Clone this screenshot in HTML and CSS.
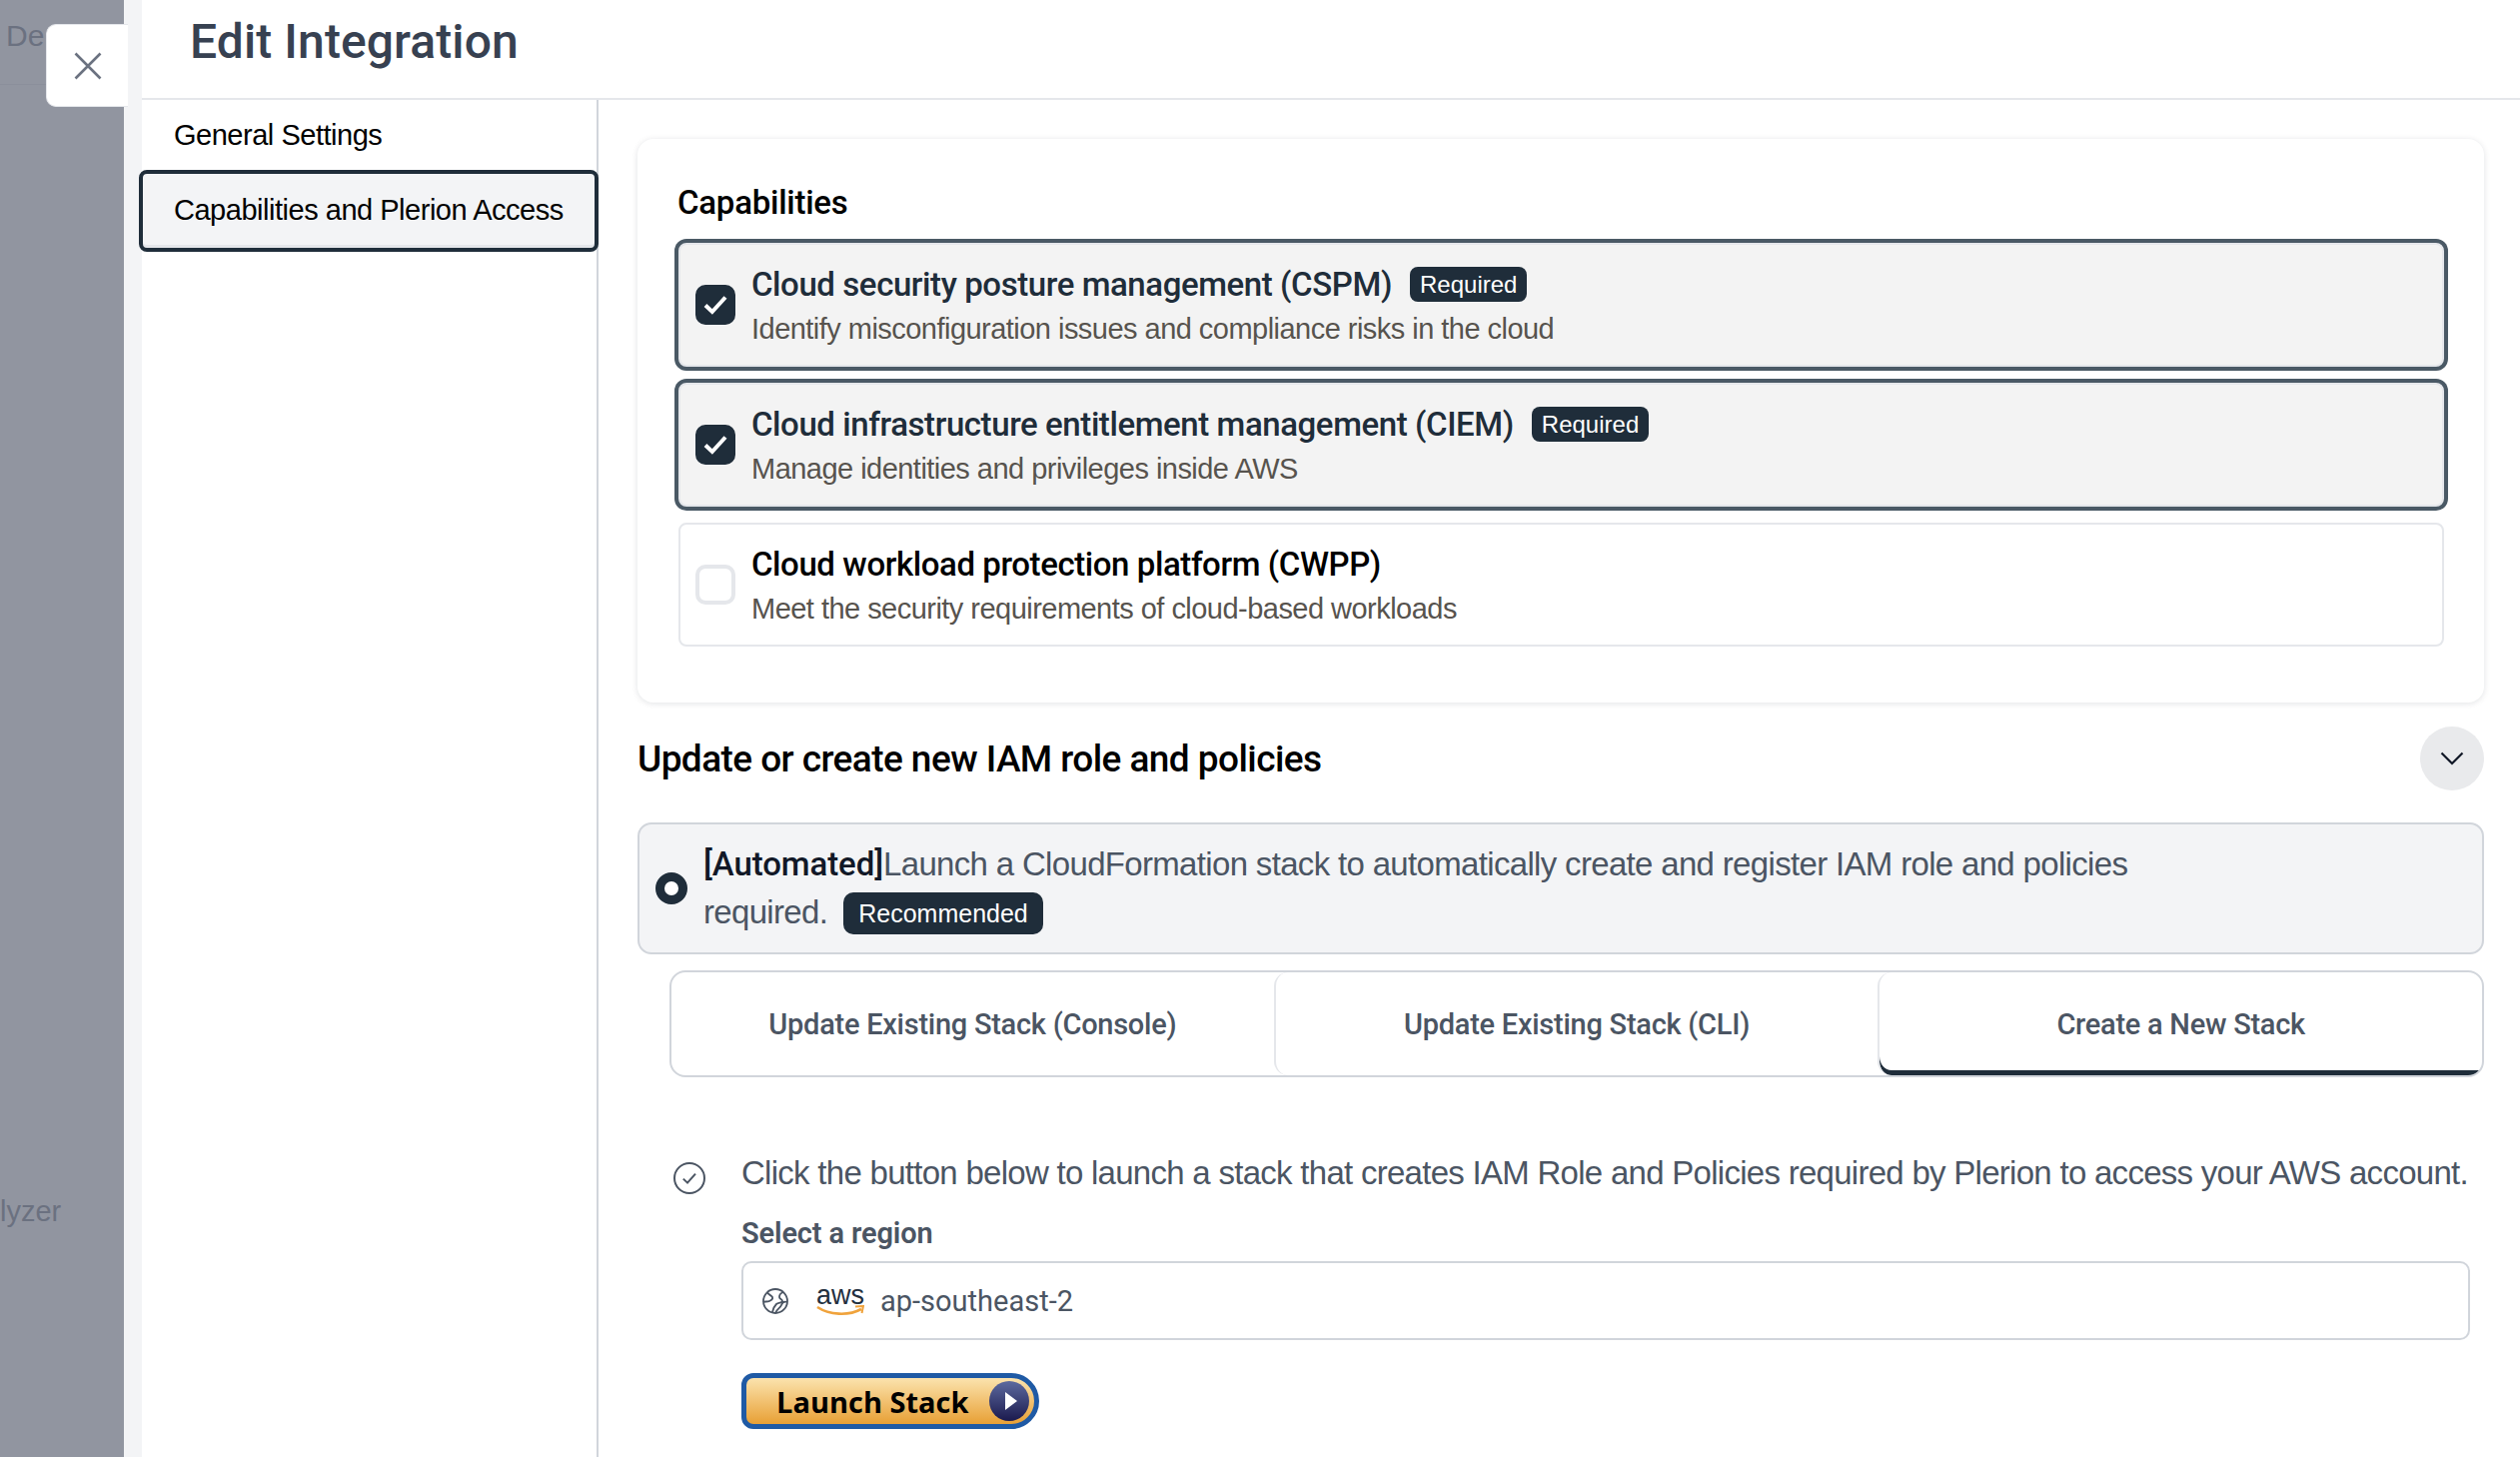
FILE: index.html
```html
<!DOCTYPE html>
<html lang="en">
<head>
<meta charset="utf-8">
<title>Edit Integration</title>
<link rel="stylesheet" href="styles.css">
</head>
<body>
<div class="app">
  <aside class="backdrop">
    <div class="backdrop-top"><span class="backdrop-de">De</span></div>
    <span class="backdrop-lyzer">lyzer</span>
  </aside>
  <button class="close" aria-label="Close">
    <svg width="28" height="28" viewBox="0 0 28 28"><path d="M1.5 1.5 26.5 26.5M26.5 1.5 1.5 26.5" fill="none" stroke="#6b7280" stroke-width="2.6"/></svg>
  </button>
  <div class="drawer">
    <header class="drawer-head"><h1>Edit Integration</h1></header>
    <div class="drawer-body">
      <nav class="side">
        <a class="side-item">General Settings</a>
        <a class="side-item active">Capabilities and Plerion Access</a>
      </nav>
      <main class="content">
        <section class="card">
          <h2>Capabilities</h2>
          <div class="caps">
            <div class="cap on">
              <span class="box checked"><svg width="28" height="28" viewBox="0 0 28 28"><path d="M4 14.500 10.800 21 24 6.500" fill="none" stroke="#fff" stroke-width="4"/></svg></span>
              <div>
                <div class="cap-title">Cloud security posture management (CSPM)<span class="tag">Required</span></div>
                <div class="cap-desc">Identify misconfiguration issues and compliance risks in the cloud</div>
              </div>
            </div>
            <div class="cap on">
              <span class="box checked"><svg width="28" height="28" viewBox="0 0 28 28"><path d="M4 14.500 10.800 21 24 6.500" fill="none" stroke="#fff" stroke-width="4"/></svg></span>
              <div>
                <div class="cap-title">Cloud infrastructure entitlement management (CIEM)<span class="tag">Required</span></div>
                <div class="cap-desc">Manage identities and privileges inside AWS</div>
              </div>
            </div>
            <div class="cap">
              <span class="box"></span>
              <div>
                <div class="cap-title off">Cloud workload protection platform (CWPP)</div>
                <div class="cap-desc">Meet the security requirements of cloud-based workloads</div>
              </div>
            </div>
          </div>
        </section>

        <div class="section-head">
          <h3>Update or create new IAM role and policies</h3>
          <button class="chev" aria-label="Collapse">
            <svg width="24" height="14" viewBox="0 0 24 14"><path d="M1.500 1.500 12 12 22.500 1.500" fill="none" stroke="#111827" stroke-width="2.2"/></svg>
          </button>
        </div>

        <div class="method">
          <span class="radio"></span>
          <p class="method-text"><b>[Automated]</b>Launch a CloudFormation stack to automatically create and register IAM role and policies<br>required.<span class="tag big">Recommended</span></p>
        </div>

        <div class="tabs">
          <div class="tab">Update Existing Stack (Console)</div>
          <div class="tab">Update Existing Stack (CLI)</div>
          <div class="tab current">Create a New Stack</div>
        </div>

        <div class="step">
          <svg class="step-icon" width="32" height="32" viewBox="0 0 32 32"><circle cx="16" cy="16" r="15" fill="none" stroke="#4b5563" stroke-width="2"/><path d="M9.800 16.600 14 20.600 22 11.600" fill="none" stroke="#4b5563" stroke-width="2"/></svg>
          <div class="step-body">
            <p class="step-text">Click the button below to launch a stack that creates IAM Role and Policies required by Plerion to access your AWS account.</p>
            <label class="field-label">Select a region</label>
            <div class="select">
              <svg class="globe" width="28" height="28" viewBox="0 0 28 28"><g fill="none" stroke="#4b5563" stroke-width="1.800"><circle cx="14" cy="14" r="12"/><path d="M6 5c1 3 4 3 5 5s-1 3-3 4-5 0-6 1M22 5c-3 1-4 3-4 5s3 2 3 4-4 1-6 3-3 3-4 8M26 15c-3-1-5 0-6 3s-5 4-6 8"/></g></svg>
              <span class="aws"><span class="aws-word">aws</span><svg width="48" height="12" viewBox="0 0 48 12"><path d="M1 2c12 8 31 9 44 2" fill="none" stroke="#f0a33c" stroke-width="2.600"/><path d="M39 1.500 47 1 45.500 8" fill="none" stroke="#f0a33c" stroke-width="2"/></svg></span>
              <span class="select-value">ap-southeast-2</span>
            </div>
            <button class="launch">Launch Stack<span class="play"><svg width="14" height="20" viewBox="0 0 14 20"><path d="M1 1 13 10 1 19Z" fill="#fff"/></svg></span></button>
          </div>
        </div>
      </main>
    </div>
  </div>
</div>
</body>
</html>
```

FILE: styles.css
```css
* { box-sizing: border-box; }
html, body { margin: 0; height: 100%; background: #fff; overflow: hidden; }
body { font-family: "Liberation Sans", Arial, sans-serif; color: #000; }
h1, h2, h3, p { margin: 0; font-weight: 400; }
button { font-family: inherit; padding: 0; cursor: pointer; }

.app { position: relative; display: flex; width: 2522px; height: 1458px; overflow: hidden; }

.backdrop { position: relative; width: 124px; flex: none; background: #9195a0; color: #6b7180; font-size: 30px; }
.backdrop-top { height: 85px; border-bottom: 1px solid #8b8f9b; }
.backdrop-de { position: absolute; left: 6px; top: 19px; }
.backdrop-lyzer { position: absolute; left: 0; top: 1196px; font-size: 29px; }

.close { position: absolute; left: 46px; top: 24px; z-index: 2; width: 82px; height: 83px; display: flex; align-items: center; justify-content: center; background: #fff; border: 1px solid #e5e7eb; border-right: 0; border-radius: 10px 0 0 10px; }

.drawer { flex: 1; min-width: 0; display: flex; flex-direction: column; border-left: 18px solid #f3f4f6; }
.drawer-head { height: 100px; flex: none; padding-left: 48px; border-bottom: 2px solid #e5e7eb; }
.drawer-head h1 { font-family: Roboto, sans-serif; font-weight: 500; font-size: 48px; letter-spacing: .1px; line-height: 84px; color: #374151; }
.drawer-body { flex: 1; display: flex; min-height: 0; }

.side { width: 457px; flex: none; display: flex; flex-direction: column; border-right: 2px solid #d1d5db; padding-top: 10px; gap: 10px; }
.side-item { display: block; height: 50px; padding-left: 32px; font-size: 29px; letter-spacing: -.48px; line-height: 50px; }
.side-item.active { height: 82px; margin: 0 -2px 0 -3px; padding-left: 31px; line-height: 72px; background: #f3f4f6; border: 4px solid #1f2d3a; border-radius: 8px; box-shadow: inset 0 -3px 0 #e5e7eb; }

.content { flex: 1; min-width: 0; padding: 39px 36px 0 39px; }

.card { height: 564px; background: #fff; border-radius: 16px; padding: 47px 40px 0 41px; box-shadow: 0 1px 6px rgba(17, 24, 39, .12); }
.card h2 { font-family: Roboto, sans-serif; font-weight: 500; font-size: 33px; letter-spacing: -.25px; line-height: 34px; margin-left: -1px; }
.caps { display: flex; flex-direction: column; gap: 16px; margin-top: 23px; }
.cap { height: 124px; display: flex; align-items: center; gap: 16px; padding: 3px 0 0 15px; border: 2px solid #e5e7eb; border-radius: 8px; }
.cap.on { background: #f3f3f3; box-shadow: 0 0 0 4px #4a5965; border-bottom-color: #e5e7eb; }
.box { width: 40px; height: 40px; flex: none; margin-top: -3px; display: flex; align-items: center; justify-content: center; border: 4px solid #e5e7eb; border-radius: 10px; background: #fff; }
.box.checked { background: #1f2d3a; border-color: #1f2d3a; }
.cap-title { display: flex; align-items: center; font-family: Roboto, sans-serif; font-weight: 500; font-size: 33px; letter-spacing: -.42px; line-height: 40px; color: #1f2d3a; }
.cap-title.off { color: #000; }
.cap-desc { font-size: 29px; letter-spacing: -.53px; line-height: 40px; margin-top: 4px; color: #57534e; }

.tag { display: inline-block; height: 35px; margin-left: 18px; padding: 0 10px; border-radius: 8px; background: #1f2d3a; color: #fff; font-family: "Liberation Sans", sans-serif; font-size: 24px; letter-spacing: 0; line-height: 35px; }
.tag.big { height: 42px; margin-left: 16px; padding: 0 15px; line-height: 42px; font-size: 25px; border-radius: 10px; vertical-align: 1px; }

.section-head { display: flex; align-items: center; justify-content: space-between; margin-top: 24px; }
.section-head h3 { font-family: Roboto, sans-serif; font-weight: 500; font-size: 37px; letter-spacing: -.57px; }
.chev { width: 64px; height: 64px; border: 0; border-radius: 50%; background: #e9eaec; display: flex; align-items: center; justify-content: center; }

.method { height: 132px; margin-top: 32px; display: flex; align-items: center; gap: 16px; padding: 0 16px; background: #f3f4f6; border: 2px solid #d1d5db; border-radius: 14px; }
.radio { width: 32px; height: 32px; flex: none; border-radius: 50%; background: #fff; border: 9px solid #1f2d3a; }
.method-text { font-size: 33px; letter-spacing: -.67px; line-height: 48px; color: #4b5563; }
.method-text b { font-family: Roboto, sans-serif; font-weight: 500; letter-spacing: -.1px; color: #111827; }

.tabs { display: flex; height: 107px; margin: 16px 0 0 32px; border: 2px solid #d1d5db; border-radius: 16px; overflow: hidden; }
.tab { flex: 1; display: flex; align-items: center; justify-content: center; font-family: Roboto, sans-serif; font-weight: 500; font-size: 29px; letter-spacing: -.26px; color: #4b5563; }
.tab + .tab { border-left: 2px solid #e5e7eb; border-radius: 14px 0 0 14px; }
.tab.current { box-shadow: inset 0 -5px 0 #1f2d3a; }

.step { display: flex; gap: 36px; margin: 85px 14px 0 36px; }
.step-icon { flex: none; }
.step-body { flex: 1; min-width: 0; }
.step-text { font-size: 33px; letter-spacing: -.72px; line-height: 40px; margin-top: -9px; color: #4b5563; white-space: nowrap; }
.field-label { display: block; margin-top: 22px; font-family: Roboto, sans-serif; font-weight: 600; font-size: 29px; letter-spacing: -.15px; line-height: 36px; color: #4b5563; }
.select { height: 79px; margin-top: 10px; display: flex; align-items: center; padding-left: 18px; border: 2px solid #d1d5db; border-radius: 10px; }
.aws { display: flex; flex-direction: column; align-items: center; width: 48px; margin-left: 27px; }
.aws-word { font-size: 27px; line-height: 20px; color: #232f3e; }
.select-value { margin-left: 16px; font-family: Roboto, sans-serif; font-size: 29px; color: #4b5563; }

.launch { position: relative; display: flex; align-items: center; width: 298px; height: 56px; margin-top: 33px; padding-left: 30px; border: 5px solid #1f5aa5; border-radius: 12px 28px 28px 12px; background: linear-gradient(#fbe3ae, #e8a035); font-family: "Open Sans", sans-serif; font-weight: 700; font-size: 29px; color: #000; }
.play { position: absolute; right: 5px; top: 3px; width: 40px; height: 40px; display: flex; align-items: center; justify-content: center; padding-left: 3px; border-radius: 50%; background: linear-gradient(#5d6a9f, #1b1a4e); }
```
